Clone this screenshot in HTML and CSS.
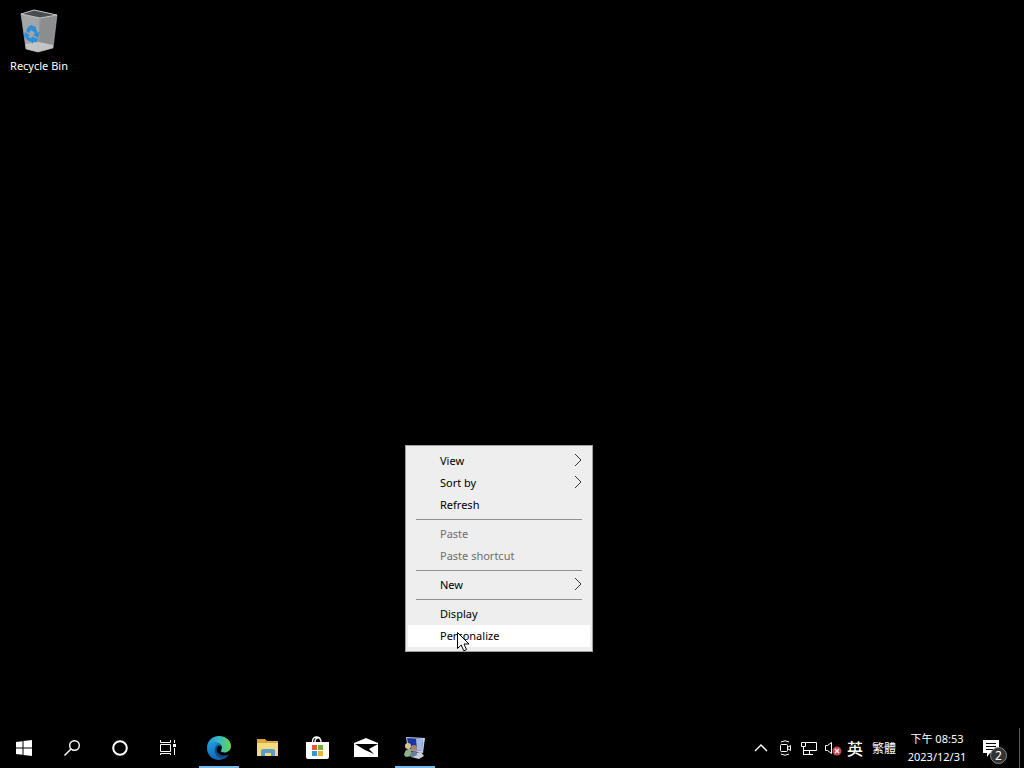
FILE: index.html
```
<!DOCTYPE html>
<html lang="en">
<head>
    <meta charset="UTF-8">
    <meta name="viewport" content="width=device-width, initial-scale=1.0">
    <title>Desktop</title>
    <link rel="stylesheet" href="styles.css">
</head>
<body>
    <main class="desktop">
        <a href="#" class="desktop-icon">
            <svg width="48" height="48" viewBox="0 0 48 48" aria-hidden="true">
                <path d="M6 6 L25 10 L23 44 L11 41 Z" fill="#a3a5a7"/>
                <path d="M25 10 L42 7 L38 40 L23 44 Z" fill="#8b8d8f"/>
                <path d="M6 6 L19 2 L42 7 L25 10 Z" fill="#4b4c4d"/>
                <path d="M10 36 L24 34 L38 37 L38 40 L23 44 L11 41 Z" fill="#c4c5c6"/>
                <path d="M6 6 L19 2 L42 7 L25 10 Z" fill="none" stroke="#c4c6c8"/>
                <path d="M6 6 L11 41 L23 44 L38 40 L42 7 M25 10 L23 43" fill="none" stroke="#b4b6b8" stroke-width="0.6"/>
                <g fill="#2e8fd8">
                    <path d="M13 19 L16 17 L21 19 L19 24 L16 22 L14 25 L11 23 Z"/>
                    <path d="M20 19 L23 25 L25 24 L23 30 L18 27 L20 26 L18 22 Z"/>
                    <path d="M10 24 L15 27 L13 29 L16 30 L16 34 L12 32 L9 28 Z"/>
                    <path d="M18 29 L23 31 L22 34 L18 34 L18 36 L15 32 L18 28 Z"/>
                </g>
            </svg>
            <span>Recycle Bin</span>
        </a>

        <div class="context-menu">
            <button class="menu-item">View<svg class="arrow" viewBox="0 0 8 14"><path d="M1 1 L7 7 L1 13"/></svg></button>
            <button class="menu-item">Sort by<svg class="arrow" viewBox="0 0 8 14"><path d="M1 1 L7 7 L1 13"/></svg></button>
            <button class="menu-item">Refresh</button>
            <hr>
            <button class="menu-item" disabled>Paste</button>
            <button class="menu-item" disabled>Paste shortcut</button>
            <hr>
            <button class="menu-item">New<svg class="arrow" viewBox="0 0 8 14"><path d="M1 1 L7 7 L1 13"/></svg></button>
            <hr>
            <button class="menu-item">Display</button>
            <button class="menu-item selected">Personalize</button>
        </div>

        <svg class="cursor" width="13" height="20" viewBox="0 0 13 20" aria-hidden="true">
            <path d="M0.5 0.5 L0.5 16.5 L4.2 13 L6.8 18.8 L9.5 17.6 L7 12 L12 12 Z" fill="#fff" stroke="#000"/>
        </svg>
    </main>

    <footer class="taskbar">
        <div class="system-buttons">
            <button class="task" aria-label="Start">
                <svg width="16" height="16" viewBox="0 0 16 16" fill="#fff">
                    <path d="M0 2 L6.5 1.2 V7.5 H0 Z M7.5 1 L16 0 V7.5 H7.5 Z M0 8.5 H6.5 V14.8 L0 14 Z M7.5 8.5 H16 V16 L7.5 15 Z"/>
                </svg>
            </button>
            <button class="task" aria-label="Search">
                <svg width="16" height="16" viewBox="0 0 16 16" fill="none" stroke="#fff" stroke-width="1.4">
                    <circle cx="10.5" cy="5.5" r="4.8"/>
                    <path d="M7 9 L0.5 15.5"/>
                </svg>
            </button>
            <button class="task" aria-label="Cortana">
                <svg width="16" height="16" viewBox="0 0 16 16" fill="none" stroke="#fff" stroke-width="2">
                    <circle cx="8" cy="8" r="6.8"/>
                </svg>
            </button>
            <button class="task" aria-label="Task view">
                <svg width="16" height="16" viewBox="0 0 16 16">
                    <path d="M0.5 0 V2.5 H10.5 V0 M0.5 4.5 H10.5 V11.5 H0.5 Z M0.5 15 V13.5 H10.5 V15 M14.5 0 V3 M14.5 8 V15" fill="none" stroke="#fff"/>
                    <rect x="13" y="4" width="3" height="3" fill="#fff"/>
                </svg>
            </button>
        </div>

        <div class="app-buttons">
            <button class="task running" aria-label="Edge">
                <svg width="24" height="24" viewBox="0 0 24 24">
                    <defs>
                        <linearGradient id="edge-top" x1="0" y1="0.5" x2="1" y2="0.5">
                            <stop offset="0" stop-color="#2793d8"/>
                            <stop offset="0.5" stop-color="#36b9c6"/>
                            <stop offset="1" stop-color="#66d64b"/>
                        </linearGradient>
                        <linearGradient id="edge-left" x1="0" y1="0" x2="0.6" y2="1">
                            <stop offset="0" stop-color="#1d9de2"/>
                            <stop offset="1" stop-color="#125ead"/>
                        </linearGradient>
                    </defs>
                    <path d="M0 12 C0 5 5 0 12 0 C19 0 24 4.8 24 10 C24 14 21 16.5 17.5 16.5 C15 16.5 13.5 15.5 14 14.5 C16 11.5 14.5 8 10.5 7 C6 6 2 8 0 12 Z" fill="url(#edge-top)"/>
                    <path d="M0 12 C1 8 4 6 8 6.5 C11 6.8 13.5 8.5 14 10.5 C11.5 8.5 9 11 9 14 C9 20 16 22 21.8 18.8 C19.5 22 16 24 12 24 C5 24 0 18.6 0 12 Z" fill="url(#edge-left)"/>
                    <path d="M10 9 C7 11 7 18 11 21 C14 23 19 21.5 22 18.6 C17 21 10.5 19 9.8 14.5 C9.5 12 10.5 10 13 9.3 C12 8.7 11 8.5 10 9 Z" fill="#124a8c"/>
                </svg>
            </button>
            <button class="task" aria-label="File Explorer">
                <svg width="24" height="24" viewBox="0 0 24 24">
                    <path d="M1 3 H9 L11 5 H22 V20 H1 Z" fill="#dba63a"/>
                    <path d="M1 7 H22 V20 H1 Z" fill="#f6da80"/>
                    <path d="M5 20 V15 Q5 13 7 13 H17 Q19 13 19 15 V20 H15 V17 H9 V20 Z" fill="#5b9bc8"/>
                </svg>
            </button>
            <button class="task" aria-label="Microsoft Store">
                <svg width="24" height="24" viewBox="0 0 24 24">
                    <path d="M7.5 6 V5 Q8 1 11.5 1 Q15 1 16 5 V6 M10 6 Q10 2 13 2" fill="none" stroke="#fff" stroke-width="1.3"/>
                    <path d="M1 6 H24 V21 Q24 23 22 23 H3 Q1 23 1 21 Z" fill="#fff"/>
                    <path d="M7 9 H12 V14 H7 Z" fill="#e9573a"/>
                    <path d="M13 9 H18 V14 H13 Z" fill="#79af38"/>
                    <path d="M7 15 H12 V20 H7 Z" fill="#2c98d5"/>
                    <path d="M13 15 H18 V20 H13 Z" fill="#efb52b"/>
                </svg>
            </button>
            <button class="task" aria-label="Mail">
                <svg width="24" height="24" viewBox="0 0 24 24">
                    <path d="M0 7 L12 2 L24 7 V21 H0 Z" fill="#fff"/>
                    <path d="M1 8 H24 L15 13 L20 18 L11 14 Z" fill="#000"/>
                </svg>
            </button>
            <button class="task running" aria-label="Personalization">
                <svg width="24" height="24" viewBox="0 0 24 24">
                    <path d="M3 1 L22 2 L20 17 L5 14 Z" fill="#c9d2e6"/>
                    <path d="M4 2 L20 3 L19 15 L6 13 Z" fill="#1d32a4"/>
                    <path d="M13 3 L20 3 L19 15 L14 14 Z" fill="#a5b8e2"/>
                    <path d="M10 17 L18 16 L21 20 L16 23 L8 21 Z" fill="#c3cedb"/>
                    <circle cx="5" cy="10" r="3" fill="#d9c68b"/>
                    <path d="M1 19 Q2 13 6 13 Q9 13 9 20 L3 21 Z" fill="#8fb28a"/>
                    <circle cx="11" cy="12" r="3" fill="#a98468"/>
                    <path d="M7 20 Q8 15 11 15 Q14 15 14 19 L10 21 Z" fill="#657f9b"/>
                </svg>
            </button>
        </div>

        <div class="tray">
            <button class="tray-button" aria-label="Show hidden icons">
                <svg width="16" height="16" viewBox="0 0 16 16" fill="none" stroke="#fff" stroke-width="1.4"><path d="M2 11 L8 5 L14 11"/></svg>
            </button>
            <button class="tray-button" aria-label="Meet now">
                <svg width="16" height="16" viewBox="0 0 16 16" fill="none" stroke="#fff">
                    <rect x="3.5" y="4.5" width="7" height="7" rx="1"/>
                    <path d="M10.5 7.5 L13.5 5.5 V10.5 L10.5 8.5 M4 2 Q8 -0.5 12 2 M4 14 Q8 16.5 12 14"/>
                </svg>
            </button>
            <button class="tray-button" aria-label="Network">
                <svg width="16" height="16" viewBox="0 0 16 16" fill="none" stroke="#fff">
                    <path d="M4.5 2.5 H15.5 V10.5 H3 M8.5 10.5 V14 M3 14.5 H12 M0.5 2.5 H4.5 V6.5 H0.5 Z M2.5 6.5 V15"/>
                </svg>
            </button>
            <button class="tray-button" aria-label="Volume muted">
                <svg width="18" height="16" viewBox="0 0 18 16">
                    <path d="M1.5 5.5 H3.5 L7.5 2.5 V13.5 L3.5 10.5 H1.5 Z" fill="none" stroke="#fff"/>
                    <circle cx="13" cy="11" r="4.5" fill="#d3434c"/>
                    <path d="M11 9 L15 13 M15 9 L11 13" stroke="#fff" stroke-width="1.3"/>
                </svg>
            </button>
            <button class="tray-button ime">英</button>
            <button class="tray-button ime-mode">繁體</button>
            <button class="clock">
                <span>下午 08:53</span>
                <span>2023/12/31</span>
            </button>
            <button class="notifications" aria-label="Notifications">
                <svg width="16" height="17" viewBox="0 0 16 17">
                    <path d="M0 0 H16 V13 H7 L4 17 V13 H0 Z" fill="#fff"/>
                    <path d="M3 3.5 H13 M3 6.5 H13 M3 9.5 H10" stroke="#000"/>
                </svg>
                <span class="badge">2</span>
            </button>
            <button class="show-desktop" aria-label="Show desktop"></button>
        </div>
    </footer>
</body>
</html>
```
FILE: styles.css
```
* {
    box-sizing: border-box;
}

body {
    display: flex;
    flex-direction: column;
    min-height: 100vh;
    margin: 0;
    background: #000;
    color: #fff;
    font-family: "Noto Sans", "Open Sans", "Noto Sans CJK TC", sans-serif;
    font-size: 12px;
    overflow: hidden;
}

button {
    padding: 0;
    border: none;
    background: none;
    color: inherit;
    font: inherit;
}

svg {
    display: block;
    flex: none;
}

.desktop {
    position: relative;
    flex: 1;
    padding: 8px 1px;
}

.desktop-icon {
    display: flex;
    flex-direction: column;
    align-items: center;
    gap: 2px;
    width: 76px;
    color: #fff;
    font-size: 11px;
    line-height: 16px;
    text-decoration: none;
}

/* Right click menu */
.context-menu {
    position: absolute;
    top: 445px;
    left: 405px;
    width: 188px;
    padding: 4px 2px;
    border: 1px solid #a0a0a0;
    background: #eee;
    color: #000;
}

.context-menu hr {
    height: 1px;
    margin: 3px 8px;
    border: none;
    background: #919191;
}

.menu-item {
    display: flex;
    align-items: center;
    justify-content: space-between;
    width: 100%;
    height: 22px;
    padding: 0 8px 2px 32px;
    font-size: 11px;
    text-align: left;
}

.menu-item:disabled {
    color: #6d6d6d;
}

.menu-item.selected {
    background: #fff;
}

.arrow {
    width: 8px;
    height: 14px;
    fill: none;
    stroke: #333;
}

.cursor {
    position: absolute;
    top: 632px;
    left: 457px;
}

/* Taskbar */
.taskbar {
    display: flex;
    height: 40px;
}

.system-buttons,
.app-buttons,
.tray {
    display: flex;
}

.app-buttons {
    gap: 1px;
    margin-left: 3px;
}

.task {
    display: flex;
    align-items: center;
    justify-content: center;
    width: 48px;
    height: 40px;
}

.running {
    background: linear-gradient(#76b9ed, #76b9ed) center bottom / 40px 2px no-repeat;
}

.tray {
    margin-left: auto;
}

.tray-button {
    display: flex;
    align-items: center;
    justify-content: center;
    width: 24px;
}

.ime {
    width: 20px;
    font-size: 16px;
    font-weight: 500;
}

.ime-mode {
    width: 38px;
    font-size: 12px;
}

.clock {
    display: flex;
    flex-direction: column;
    align-items: center;
    justify-content: center;
    width: 68px;
    font-size: 11px;
    line-height: 18px;
}

.notifications {
    position: relative;
    display: flex;
    align-items: center;
    justify-content: center;
    width: 48px;
    padding-right: 8px;
}

.badge {
    position: absolute;
    top: 19px;
    left: 19px;
    width: 17px;
    height: 17px;
    border: 1px solid #8a8a8a;
    border-radius: 50%;
    background: #333;
    font-size: 12px;
    line-height: 15px;
    text-align: center;
}

.show-desktop {
    width: 5px;
    border-left: 1px solid #5a5a5a;
}
```
